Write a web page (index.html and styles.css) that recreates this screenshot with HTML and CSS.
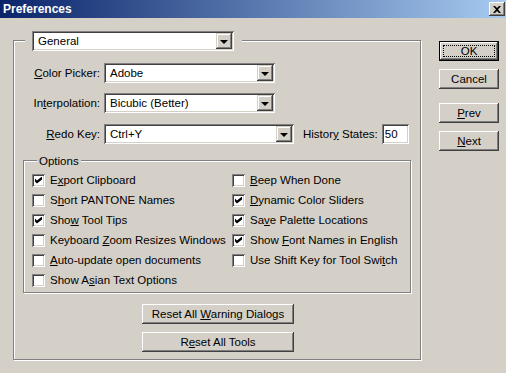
FILE: index.html
```html
<!DOCTYPE html>
<html lang="en">
<head>
    <meta charset="UTF-8">
    <title>Preferences</title>
    <link rel="stylesheet" href="styles.css">
</head>
<body>
    <div class="window">
        <div class="titlebar">
            <span class="title">Preferences</span>
            <button class="close-btn" aria-label="Close">
                <svg width="8" height="7" viewBox="0 0 8 7"><path d="M0 0h2l2 2 2-2h2L5 3.5 8 7H6L4 5 2 7H0l3-3.5z" fill="#000"/></svg>
            </button>
        </div>

        <div class="dialog">
            <div class="group main-group">
                <div class="group-head main-head">
                    <div class="combo combo-general">
                        <span class="combo-text">General</span>
                        <span class="combo-btn"><span class="arrow"></span></span>
                    </div>
                </div>

                <div class="field-row first-row">
                    <span class="field-label"><u>C</u>olor Picker:</span>
                    <div class="combo combo-short">
                        <span class="combo-text">Adobe</span>
                        <span class="combo-btn"><span class="arrow"></span></span>
                    </div>
                </div>
                <div class="field-row">
                    <span class="field-label">In<u>t</u>erpolation:</span>
                    <div class="combo combo-short">
                        <span class="combo-text">Bicubic (Better)</span>
                        <span class="combo-btn"><span class="arrow"></span></span>
                    </div>
                </div>
                <div class="field-row redo-row">
                    <span class="field-label"><u>R</u>edo Key:</span>
                    <div class="combo combo-redo">
                        <span class="combo-text">Ctrl+Y</span>
                        <span class="combo-btn"><span class="arrow"></span></span>
                    </div>
                    <span class="history-label">Histor<u>y</u> States:</span>
                    <span class="text-input">50</span>
                </div>

                <div class="group options-group">
                    <div class="group-head options-head">Options</div>
                    <div class="checks">
                        <label class="check"><span class="box checked"></span><span>E<u>x</u>port Clipboard</span></label>
                        <label class="check"><span class="box"></span><span>S<u>h</u>ort PANTONE Names</span></label>
                        <label class="check"><span class="box checked"></span><span>Sho<u>w</u> Tool Tips</span></label>
                        <label class="check"><span class="box"></span><span>Keyboard <u>Z</u>oom Resizes Windows</span></label>
                        <label class="check"><span class="box"></span><span><u>A</u>uto-update open documents</span></label>
                        <label class="check"><span class="box"></span><span>Show A<u>s</u>ian Text Options</span></label>
                        <label class="check"><span class="box"></span><span><u>B</u>eep When Done</span></label>
                        <label class="check"><span class="box checked"></span><span><u>D</u>ynamic Color Sliders</span></label>
                        <label class="check"><span class="box checked"></span><span>Sa<u>v</u>e Palette Locations</span></label>
                        <label class="check"><span class="box checked"></span><span>Show <u>F</u>ont Names in English</span></label>
                        <label class="check"><span class="box"></span><span>Use Shift Key for Tool Swi<u>t</u>ch</span></label>
                    </div>
                </div>

                <button class="btn wide-btn first-wide"><span>Reset All <u>W</u>arning Dialogs</span></button>
                <button class="btn wide-btn"><span>R<u>e</u>set All Tools</span></button>
            </div>

            <div class="side">
                <button class="btn side-btn default-btn"><span>OK</span></button>
                <button class="btn side-btn"><span>Cancel</span></button>
                <button class="btn side-btn prev-btn"><span><u>P</u>rev</span></button>
                <button class="btn side-btn"><span><u>N</u>ext</span></button>
            </div>
        </div>
    </div>
</body>
</html>
```

FILE: styles.css
```css
* {
    margin: 0;
    padding: 0;
    box-sizing: border-box;
}

:root {
    --face: #d4d0c8;
    --shadow: #808080;
    --dark: #404040;
    --light: #ffffff;
}

body {
    background: var(--face);
    font-family: 'Liberation Sans', Arial, sans-serif;
    font-size: 11.5px;
    color: #000;
    width: 506px;
    height: 373px;
    overflow: hidden;
}

u {
    text-decoration: underline;
    text-underline-offset: 1px;
}

.titlebar {
    height: 18px;
    background: linear-gradient(to right, #0a246a, #a6caf0);
    display: flex;
    align-items: center;
    justify-content: space-between;
    padding: 0 1px 0 3px;
}

.title {
    color: #fff;
    font-weight: bold;
    font-size: 12px;
}

.close-btn {
    width: 16px;
    height: 14px;
    border: none;
    background: var(--face);
    display: flex;
    align-items: center;
    justify-content: center;
    box-shadow: inset -1px -1px var(--dark), inset 1px 1px var(--light),
                inset -2px -2px var(--shadow), inset 2px 2px var(--face);
}

.dialog {
    display: flex;
    align-items: flex-start;
    padding: 22px 0 0 13px;
}

/* etched group frame */
.group {
    border: 1px solid var(--shadow);
    box-shadow: inset 1px 1px var(--light), 1px 1px var(--light);
}

.group-head {
    background: var(--face);
    width: fit-content;
}

.main-group {
    width: 408px;
    padding-bottom: 7px;
}

.main-head {
    margin: -10px 0 0 11px;
    padding: 0 8px 0 7px;
}

/* sunken fields */
.combo,
.text-input,
.box {
    background: #fff;
    box-shadow: inset 1px 1px var(--shadow), inset -1px -1px var(--light),
                inset 2px 2px var(--dark), inset -2px -2px var(--face);
}

.combo {
    height: 20px;
    display: flex;
    align-items: center;
    justify-content: space-between;
    padding: 2px;
}

.combo-text {
    padding-left: 4px;
}

.combo-btn {
    width: 16px;
    height: 16px;
    background: var(--face);
    display: flex;
    align-items: center;
    justify-content: center;
    box-shadow: inset -1px -1px var(--dark), inset 1px 1px var(--face),
                inset -2px -2px var(--shadow), inset 2px 2px var(--light);
}

.arrow {
    width: 0;
    height: 0;
    border-left: 4px solid transparent;
    border-right: 4px solid transparent;
    border-top: 4px solid #000;
    margin-top: 1px;
}

.combo-general {
    width: 202px;
}

.combo-short {
    width: 171px;
}

.combo-redo {
    width: 190px;
}

.field-row {
    display: flex;
    align-items: center;
    margin-top: 10px;
}

.first-row {
    margin-top: 12px;
}

.redo-row {
    margin-top: 11px;
}

.field-label {
    width: 86px;
    text-align: right;
    margin-right: 4px;
}

.history-label {
    margin-left: 9px;
    margin-right: 4px;
}

.text-input {
    width: 27px;
    height: 20px;
    padding: 0 0 0 3px;
    display: flex;
    align-items: center;
}

.options-group {
    width: 388px;
    margin: 16px 0 0 9px;
    padding-bottom: 2px;
}

.options-head {
    margin: -7px 0 0 13px;
    padding: 0 2px;
    line-height: 14px;
}

.checks {
    display: grid;
    grid-template-columns: 200px 1fr;
    grid-template-rows: repeat(6, 20px);
    grid-auto-flow: column;
    margin-top: 2px;
    padding-left: 8px;
}

.check {
    display: flex;
    align-items: center;
    gap: 5px;
    white-space: nowrap;
}

.box {
    width: 13px;
    height: 13px;
    flex: none;
    position: relative;
}

.box.checked::after {
    content: '';
    position: absolute;
    left: 3px;
    top: 3px;
    width: 7px;
    height: 7px;
    background: #000;
    clip-path: polygon(0 28%, 28% 57%, 100% 0, 100% 43%, 28% 100%, 0 71%);
}

.btn {
    font: inherit;
    color: #000;
    background: var(--face);
    border: none;
    height: 20px;
    display: flex;
    align-items: center;
    justify-content: center;
    box-shadow: inset -1px -1px var(--dark), inset 1px 1px var(--light),
                inset -2px -2px var(--shadow), inset 2px 2px var(--face);
}

.wide-btn {
    width: 152px;
    margin: 8px 0 0 128px;
}

.first-wide {
    margin-top: 11px;
}

.side {
    display: flex;
    flex-direction: column;
    gap: 8px;
    margin: 1px 0 0 18px;
}

.side-btn {
    width: 60px;
}

.prev-btn {
    margin-top: 6px;
}

.default-btn {
    position: relative;
    box-shadow: inset 0 0 0 1px #000, inset -2px -2px var(--dark), inset 2px 2px var(--light),
                inset -3px -3px var(--shadow), inset 3px 3px var(--face);
}

.default-btn::after {
    content: '';
    position: absolute;
    inset: 4px;
    border: 1px dotted #000;
}
```
